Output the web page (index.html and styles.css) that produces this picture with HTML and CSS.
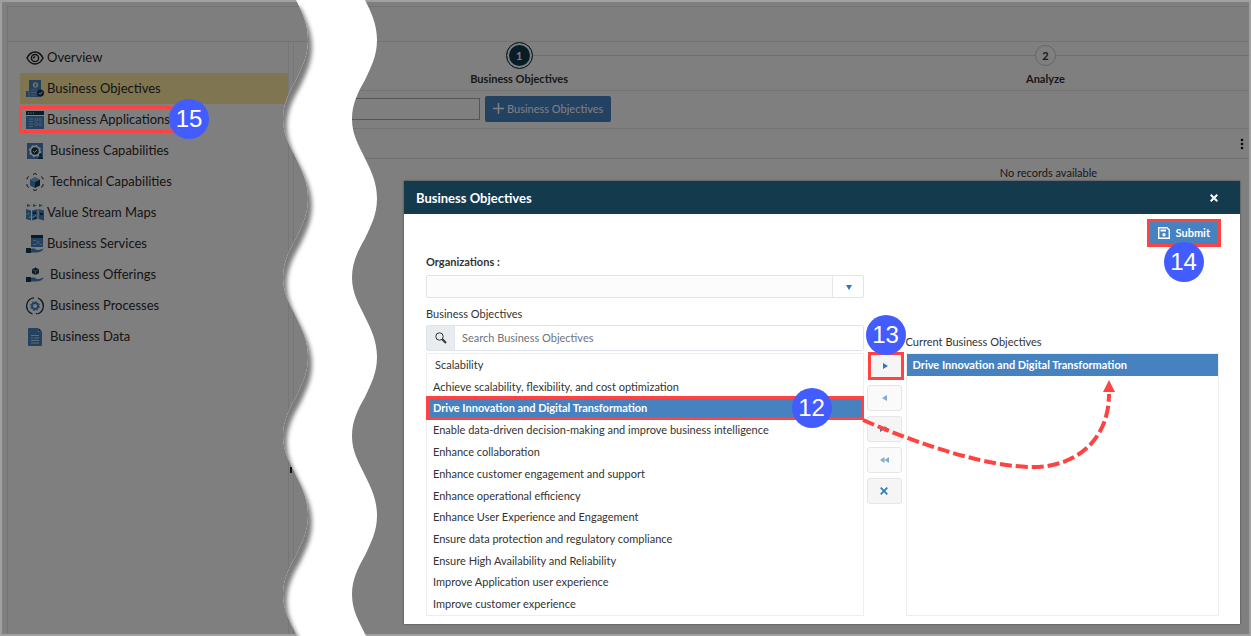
FILE: index.html
```
<!DOCTYPE html>
<html lang="en">
  <head>
    <meta charset="utf-8" />
    <meta name="viewport" content="width=device-width, initial-scale=1" />
    <title>Business Objectives</title>
    <link rel="stylesheet" href="styles.css">
  </head>
  <body>
    <div class="app">
      <header class="topbar"></header>

      <div class="content">
        <nav class="sidebar">
          <a href="#" class="nav-item">
            <svg class="icon" viewBox="0 0 18 18" fill="none" stroke="#222" stroke-width="1.5">
              <path d="M1 9c2-4 5-6 8-6s6 2 8 6c-2 4-5 6-8 6s-6-2-8-6z" />
              <circle cx="9" cy="9" r="3.6" />
              <path d="M7.5 9.5c0-1 .7-1.7 1.8-1.8" />
            </svg>
            Overview
          </a>
          <a href="#" class="nav-item active">
            <svg class="icon" viewBox="0 0 18 18">
              <path d="M3 0h12v17H0v-6h3z" fill="#4682c0" />
              <circle cx="9.500" cy="5" r="2.700" fill="#e8e2c0" />
              <path d="M9.500 3.500v3M8.300 5h2.400" stroke="#4682c0" />
              <path d="M5 10h6M5 12.500h6M5 15h5M3 11v6" stroke="#8fb3d8" />
              <circle cx="14.500" cy="13" r="3.500" fill="#133a4d" />
              <path d="M12.800 13l1.300 1.300 2.200-2.500" stroke="#eee" fill="none" />
            </svg>
            Business Objectives
          </a>
          <a href="#" class="nav-item">
            <svg class="icon" viewBox="0 0 18 18">
              <path d="M0 0h18v4H0z" fill="#133a4d" />
              <path d="M0 5h18v13H0z" fill="#4682c0" />
              <path d="M2 2h1M4.500 2h1M7 2h1" stroke="#fff" />
              <path d="M3 8h4M3 10.500h4M3 13h4M3 15.500h4" stroke="#9cbfe0" />
              <g fill="none" stroke="#9cbfe0">
                <rect x="9" y="7.500" width="2.600" height="2.600" rx="1" />
                <rect x="13" y="7.500" width="2.600" height="2.600" rx="1" />
                <rect x="9" y="12" width="2.600" height="2.600" rx="1" />
                <rect x="13" y="12" width="2.600" height="2.600" rx="1" />
              </g>
            </svg>
            Business Applications
          </a>
          <a href="#" class="nav-item wide">
            <svg class="icon" viewBox="0 0 18 18">
              <path d="M1 1h16v16H1z" fill="#4682c0" />
              <circle cx="9" cy="9" r="5.400" fill="#fff" />
              <circle cx="9" cy="9" r="5.400" fill="none" stroke="#fff" stroke-width="1.500" stroke-dasharray="2 2.240" />
              <circle cx="9" cy="9" r="3.700" fill="#133a4d" />
              <path d="M7 9l1.500 1.500L11 7.800" stroke="#fff" fill="none" />
              <circle cx="14.500" cy="13" r="1.500" fill="#133a4d" />
              <path d="M12 17c0-3 5-3 5 0z" fill="#133a4d" />
            </svg>
            Business Capabilities
          </a>
          <a href="#" class="nav-item wide">
            <svg class="icon" viewBox="0 0 18 18">
              <path d="M9 4l5 2.500L9 9 4 6.500z" fill="#78a8d8" />
              <path d="M4 6.500L9 9v6l-5-2.500z" fill="#4682c0" />
              <path d="M14 6.500L9 9v6l5-2.500z" fill="#133a4d" />
              <path d="M7 1.500l2-1 2 1M1 6.500V5l2-1.500M17 6.500V5l-2-1.500M1 11v2l2 1.500M17 11v2l-2 1.500M7 16.500l2 1 2-1" fill="none" stroke="#333" />
            </svg>
            Technical Capabilities
          </a>
          <a href="#" class="nav-item">
            <svg class="icon" viewBox="0 0 18 18">
              <path d="M0 5l5 1.500v10L0 15zM6 6.500L11.500 5v10L6 16.500zM12.500 5L18 6.500v10L12.500 15z" fill="#4682c0" />
              <path d="M1 0l4 1.500L1 3zM7 0l4 1.500L7 3zM13 0l4 1.500L13 3z" fill="#2e9a64" />
              <path d="M0 9h4v2H0z" fill="#63b98c" />
              <path d="M7 8h3v2H7zM14 9h3v2h-3zM8 13h2v2H8z" fill="#133a4d" />
              <path d="M3 14c3-4 4 2 7-3" stroke="#dce8f3" fill="none" />
            </svg>
            Value Stream Maps
          </a>
          <a href="#" class="nav-item">
            <svg class="icon" viewBox="0 0 18 18">
              <path d="M5 0h12v3H5z" fill="#133a4d" />
              <path d="M5 3h12v9H5z" fill="#4682c0" />
              <path d="M7 5.500h3l4 4h2M7 9.500h3l4-4" stroke="#9cbfe0" fill="none" />
              <path d="M0 13h5v5H0z" fill="#133a4d" />
              <path d="M5 14c3-1 4 0 6 1h2l5-1.500c-2 3-5 4-8 4H5z" fill="#4682c0" />
            </svg>
            Business Services
          </a>
          <a href="#" class="nav-item wide">
            <svg class="icon" viewBox="0 0 18 18">
              <path d="M9.500 1.500L13 3.200v4L9.500 9 6 7.200v-4z" fill="#133a4d" />
              <path d="M6.500 3.700l3 1.500 3-1.500M9.500 5.200V8.500" stroke="#bbb" stroke-width=".7" fill="none" />
              <path d="M0 11h5v5H0z" fill="#133a4d" />
              <path d="M5 12c3-1 4 0 6 1h2l5-1.500c-2 3-5 4-8 4H5z" fill="#4682c0" />
            </svg>
            Business Offerings
          </a>
          <a href="#" class="nav-item wide">
            <svg class="icon" viewBox="0 0 18 18" fill="none">
              <path d="M6.500 1A8.400 8.400 0 0 0 4 15.700M14 2.300A8.400 8.400 0 0 1 11.500 17M8 .8l-1.500.3M11 17l-1-.8M12 1l2 1.300M4 15.700L6.500 17" stroke="#133a4d" stroke-width="1.300" />
              <circle cx="9" cy="9" r="3" stroke="#4682c0" stroke-width="2" />
              <circle cx="9" cy="9" r="4.500" stroke="#4682c0" stroke-dasharray="1.800 1.730" />
            </svg>
            Business Processes
          </a>
          <a href="#" class="nav-item wide">
            <svg class="icon" viewBox="0 0 18 18">
              <path d="M3 0h9v4h4v13a1 1 0 0 1-1 1H3a1 1 0 0 1-1-1V1a1 1 0 0 1 1-1z" fill="#4682c0" />
              <path d="M12.500 0L16 3.500h-3.500z" fill="#133a4d" />
              <path d="M5 7.500h8M5 10h2M8 10h5M5 12.500h8M5 15h8" stroke="#c8dbed" />
            </svg>
            Business Data
          </a>
        </nav>

        <main class="main">
          <ol class="steps">
            <li class="step current">
              <span class="step-number">1</span>
              <span class="step-label">Business Objectives</span>
            </li>
            <li class="step">
              <span class="step-number">2</span>
              <span class="step-label">Analyze</span>
            </li>
          </ol>
          <div class="toolbar">
            <input type="text" class="filter" aria-label="Filter" />
            <button type="button" class="add-button">
              <svg width="11" height="11" viewBox="0 0 11 11" stroke="#fff" stroke-width="1.500"><path d="M5.500 0v11M0 5.500h11" /></svg>
              Business Objectives
            </button>
          </div>
          <div class="grid-header">
            <button type="button" class="more" aria-label="More">
              <svg width="4" height="12" viewBox="0 0 4 12" fill="#111"><circle cx="2" cy="2" r="1.300" /><circle cx="2" cy="6" r="1.300" /><circle cx="2" cy="10" r="1.300" /></svg>
            </button>
          </div>
          <p class="empty">No records available</p>
        </main>
      </div>

      <div class="backdrop"></div>

      <!-- torn strip between the menu and the rest of the page -->
      <svg class="tear" width="120" height="800" viewBox="0 0 120 800">
        <defs>
          <clipPath id="strip">
            <path d="M95 0 c6 12 12 24 12 40 c0 16 -6 27 -12 40 c-7 12 -13 24 -13 39 c0 16 7 27 13 39.500 c6 12 12 24 12 40 c0 16 -6 27 -12 40 c-7 12 -13 24 -13 39 c0 16 7 27 13 39.500 c6 12 12 24 12 40 c0 16 -6 27 -12 40 c-7 12 -13 24 -13 39 c0 16 7 27 13 39.500 c6 12 12 24 12 40 c0 16 -6 27 -12 40 c-7 12 -13 24 -13 39 c0 16 7 27 13 39.500 c6 12 12 24 12 40 c0 16 -6 27 -12 40 c-7 12 -13 24 -13 39 c0 16 7 27 13 39.500 h-69 c-6 -12.500 -13 -23.500 -13 -39.500 c0 -15 6 -27 13 -39 c6 -13 12 -24 12 -40 c0 -16 -6 -28 -12 -40 c-6 -12.500 -13 -23.500 -13 -39.500 c0 -15 6 -27 13 -39 c6 -13 12 -24 12 -40 c0 -16 -6 -28 -12 -40 c-6 -12.500 -13 -23.500 -13 -39.500 c0 -15 6 -27 13 -39 c6 -13 12 -24 12 -40 c0 -16 -6 -28 -12 -40 c-6 -12.500 -13 -23.500 -13 -39.500 c0 -15 6 -27 13 -39 c6 -13 12 -24 12 -40 c0 -16 -6 -28 -12 -40 c-6 -12.500 -13 -23.500 -13 -39.500 c0 -15 6 -27 13 -39 c6 -13 12 -24 12 -40 c0 -16 -6 -28 -12 -40 z" />
          </clipPath>
          <filter id="soft" x="-20%" width="140%"><feGaussianBlur stdDeviation="2" /></filter>
        </defs>
        <path d="M20 467h2v6h-2z" fill="#111" />
        <g clip-path="url(#strip)">
          <path d="M0 0h120v800H0z" fill="#fff" />
          <path transform="translate(4 7)" filter="url(#soft)" fill="#7c7c7c" d="M-20 0 H26 c6 12 12 24 12 40 c0 16 -6 27 -12 40 c-7 12 -13 24 -13 39 c0 16 7 27 13 39.500 c6 12 12 24 12 40 c0 16 -6 27 -12 40 c-7 12 -13 24 -13 39 c0 16 7 27 13 39.500 c6 12 12 24 12 40 c0 16 -6 27 -12 40 c-7 12 -13 24 -13 39 c0 16 7 27 13 39.500 c6 12 12 24 12 40 c0 16 -6 27 -12 40 c-7 12 -13 24 -13 39 c0 16 7 27 13 39.500 c6 12 12 24 12 40 c0 16 -6 27 -12 40 c-7 12 -13 24 -13 39 c0 16 7 27 13 39.500 H-20z" />
        </g>
      </svg>

      <div class="callout-box nav-callout"><span class="badge">15</span></div>

      <section class="modal" role="dialog" aria-labelledby="modal-title">
        <header class="modal-header">
          <h1 id="modal-title">Business Objectives</h1>
          <button type="button" class="close" aria-label="Close">
            <svg width="8" height="8" viewBox="0 0 8 8" stroke="#fff" stroke-width="2"><path d="M.7.7l6.600 6.600M7.300.7L.7 7.300" /></svg>
          </button>
        </header>

        <form class="modal-body">
          <div class="actions">
            <button type="button" class="submit">
              <svg width="12" height="12" viewBox="0 0 12 12" fill="none" stroke="#fff" stroke-width="1.400">
                <path d="M.7.7h8.300l2.300 2.300v8.300H.7z" />
                <path d="M2.500 3.500h5.500" stroke-width="2" />
                <circle cx="6" cy="7.800" r="1" />
              </svg>
              Submit
              <span class="badge">14</span>
            </button>
          </div>

          <div class="picker">
            <div class="available">
              <label class="label-strong" for="organizations">Organizations :</label>
              <div class="select-wrap">
                <select id="organizations"><option></option></select>
                <svg class="caret" width="6" height="5" viewBox="0 0 6 5" fill="#2f78bd"><path d="M0 0h6L3 5z" /></svg>
              </div>

              <label class="label" for="search">Business Objectives</label>
              <div class="search">
                <span class="search-icon">
                  <svg width="12" height="12" viewBox="0 0 12 12" fill="none" stroke="#333"><circle cx="4.500" cy="4.500" r="3.700" /><path d="M7.300 7.300L11 11" stroke-width="2" /></svg>
                </span>
                <input type="text" id="search" placeholder="Search Business Objectives" />
              </div>

              <ul class="list" role="listbox" aria-label="Business Objectives">
                <li class="indent" role="option">Scalability</li>
                <li role="option">Achieve scalability, flexibility, and cost optimization</li>
                <li class="selected marked" role="option" aria-selected="true">Drive Innovation and Digital Transformation<span class="badge">12</span></li>
                <li role="option">Enable data-driven decision-making and improve business intelligence</li>
                <li role="option">Enhance collaboration</li>
                <li role="option">Enhance customer engagement and support</li>
                <li role="option">Enhance operational efficiency</li>
                <li role="option">Enhance User Experience and Engagement</li>
                <li role="option">Ensure data protection and regulatory compliance</li>
                <li role="option">Ensure High Availability and Reliability</li>
                <li role="option">Improve Application user experience</li>
                <li role="option">Improve customer experience</li>
              </ul>
            </div>

            <div class="transfer">
              <button type="button" class="marked" aria-label="Add">
                <svg width="5" height="6" viewBox="0 0 5 6" fill="#2f78bd"><path d="M0 0l5 3-5 3z" /></svg>
                <span class="badge">13</span>
              </button>
              <button type="button" aria-label="Remove" disabled>
                <svg width="5" height="6" viewBox="0 0 5 6" fill="#2f78bd"><path d="M5 0L0 3l5 3z" /></svg>
              </button>
              <button type="button" aria-label="Add all">
                <svg width="9" height="6" viewBox="0 0 9 6" fill="#2f78bd"><path d="M0 0l4.500 3L0 6zM4.500 0L9 3 4.500 6z" /></svg>
              </button>
              <button type="button" aria-label="Remove all" disabled>
                <svg width="9" height="6" viewBox="0 0 9 6" fill="#2f78bd"><path d="M4.500 0L0 3l4.500 3zM9 0L4.500 3 9 6z" /></svg>
              </button>
              <button type="button" aria-label="Clear">
                <svg width="8" height="8" viewBox="0 0 8 8" stroke="#2f78bd" stroke-width="1.700"><path d="M.7.7l6.600 6.600M7.300.7L.7 7.300" /></svg>
              </button>
            </div>

            <div class="chosen">
              <h2 class="label">Current Business Objectives</h2>
              <ul class="list" role="listbox" aria-label="Current Business Objectives">
                <li class="selected" role="option" aria-selected="true">Drive Innovation and Digital Transformation</li>
              </ul>
            </div>
          </div>
        </form>

        <svg class="arrow" width="260" height="100" viewBox="0 0 260 100">
          <path d="M3 44 C65 71 130 91 173 91 S249 64 249 18" fill="none" stroke="#ff4343" stroke-width="4" stroke-dasharray="12 4" />
          <path d="M249 4l6 12h-12z" fill="#ff4343" />
        </svg>
      </section>
    </div>
  </body>
</html>
```
FILE: styles.css
```
* {
  box-sizing: border-box;
}
body {
  margin: 0;
  font-family: Lato, "Liberation Sans", sans-serif;
  font-size: 11px;
  color: #333;
}
button,
input,
select {
  font: inherit;
  color: inherit;
}
button {
  padding: 0;
  border: none;
  background: none;
  cursor: pointer;
}
ul,
ol {
  list-style: none;
  margin: 0;
  padding: 0;
}

/* page behind the dialog */
.app {
  position: relative;
  display: flex;
  flex-direction: column;
  height: 100vh;
  min-height: 600px;
  padding: 6px 2px 2px 7px;
  background: #fff;
  overflow: hidden;
}
.topbar {
  height: 36px;
  flex: none;
  border: 1px solid #e6e6e6;
  border-right: none;
  background: #fcfcfc;
}
.content {
  display: flex;
  flex: 1;
}
.sidebar {
  width: 282px;
  flex: none;
  padding-left: 12px;
  border-left: 1px solid #e6e6e6;
  border-right: 1px solid #ececec;
}
.nav-item {
  display: flex;
  align-items: center;
  gap: 3px;
  height: 31px;
  padding: 0 0 2px 6px;
  font-size: 13px;
  color: #2b2b2b;
  text-decoration: none;
}
.nav-item.wide {
  gap: 6px;
}
.nav-item.active {
  background: #ffeaa0;
  border-radius: 2px;
}
.icon {
  width: 18px;
  height: 18px;
  flex: none;
  margin-top: 2px;
}
.main {
  flex: 1;
  min-width: 0;
  margin-left: 4px;
  border-left: 1px solid #ececec;
  overflow: hidden;
}
.steps {
  display: flex;
  height: 49px;
  margin-left: -38px;
  border-bottom: 1px solid #e6e6e6;
}
.step {
  position: relative;
  display: flex;
  flex-direction: column;
  align-items: center;
  width: 53%;
  flex: none;
}
.step::before {
  content: "";
  position: absolute;
  top: 13px;
  left: 0;
  right: -100%;
  border-top: 1px solid #dcdcdc;
}
.step.current::before {
  left: 50%;
  right: 0;
}
.step-number {
  position: relative;
  display: flex;
  align-items: center;
  justify-content: center;
  width: 21px;
  height: 21px;
  margin: 3px 0;
  border: 1px solid #ccc;
  border-radius: 50%;
  background: #fff;
  font-weight: bold;
}
.current .step-number {
  width: 27px;
  height: 27px;
  margin: 0;
  border: 1px solid #133a4d;
  background: #133a4d;
  box-shadow: inset 0 0 0 2px #fff;
  color: #fff;
}
.step-label {
  margin-top: 2px;
  line-height: 16px;
  font-weight: bold;
}
.toolbar {
  display: flex;
  align-items: center;
  gap: 5px;
  height: 38px;
  padding-bottom: 2px;
  border-bottom: 1px solid #e6e6e6;
}
.filter {
  width: 186px;
  height: 22px;
  border: 1px solid #aaa;
}
.add-button {
  display: flex;
  align-items: center;
  gap: 3px;
  height: 26px;
  padding: 0 8px;
  border-radius: 2px;
  background: #4682c0;
  color: #fff;
}
.grid-header {
  display: flex;
  align-items: center;
  justify-content: flex-end;
  height: 30px;
  padding-right: 5px;
  border-bottom: 1px solid #dfdfea;
}
.more {
  display: flex;
}
.empty {
  margin: 6px 0 0 58%;
  line-height: 16px;
  text-align: center;
}
.backdrop {
  position: absolute;
  inset: 0;
  border: 2px solid #a0a0a0;
  background: rgba(0, 0, 0, 0.5);
  background-clip: padding-box;
}
.tear {
  position: absolute;
  top: 0;
  left: 270px;
}

/* numbered callouts */
.badge {
  position: absolute;
  display: flex;
  align-items: center;
  justify-content: center;
  width: 40px;
  height: 40px;
  border-radius: 50%;
  background: #425cff;
  color: #fff;
  font-family: "Liberation Sans", Arial, sans-serif;
  font-size: 24px;
  font-weight: normal;
}
.callout-box {
  position: absolute;
  border: 3px solid #ff4343;
}
.nav-callout {
  top: 106px;
  left: 19px;
  width: 170px;
  height: 27px;
}
.nav-callout .badge {
  top: -10px;
  right: -23px;
}

/* dialog */
.modal {
  position: absolute;
  top: 181px;
  left: 404px;
  right: 11px;
  bottom: 12px;
  display: flex;
  flex-direction: column;
  background: #fff;
  box-shadow: 0 0 2px rgba(0, 0, 0, 0.5);
}
.modal-header {
  display: flex;
  align-items: center;
  justify-content: space-between;
  height: 33px;
  flex: none;
  padding: 0 22px 0 12px;
  background: #133a4d;
  color: #fff;
}
.modal-header h1 {
  margin: 0;
  font-size: 13px;
}
.close {
  display: flex;
}
.modal-body {
  display: flex;
  flex-direction: column;
  flex: 1;
  min-height: 0;
  padding: 5px 21px 8px 22px;
}
.actions {
  display: flex;
  justify-content: flex-end;
  margin-right: -2px;
}
.submit {
  position: relative;
  display: flex;
  align-items: center;
  gap: 6px;
  height: 28px;
  padding: 0 8px 2px;
  border: 3px solid #ff4343;
  background: #4682c0;
  color: #fff;
  font-weight: bold;
}
.submit svg {
  margin-top: 2px;
}
.submit .badge {
  top: 20px;
  left: 14px;
}
.picker {
  display: flex;
  flex: 1;
  min-height: 0;
}
.available {
  display: flex;
  flex-direction: column;
  flex: 437;
  min-width: 0;
}
.label,
.label-strong {
  margin: 0;
  font-size: 11px;
  font-weight: normal;
  line-height: 16px;
}
.label-strong {
  margin: 7px 0 5px;
  font-weight: bold;
}
.select-wrap {
  position: relative;
  height: 23px;
  flex: none;
  margin-bottom: 8px;
}
.select-wrap select {
  appearance: none;
  width: 100%;
  height: 100%;
  border: 1px solid #dfe3ea;
  border-radius: 2px;
  background: linear-gradient(to left, #fff 30px, #e4e7ec 30px, #e4e7ec 31px, #fcfcfc 31px);
}
.caret {
  position: absolute;
  top: 10px;
  right: 12px;
}
.search {
  display: flex;
  height: 26px;
  flex: none;
  margin: 3px 0 2px;
  border: 1px solid #dfe3ea;
  border-radius: 2px;
}
.search-icon {
  display: flex;
  align-items: center;
  justify-content: center;
  width: 28px;
  border-right: 1px solid #dfe3ea;
  background: #e9ecef;
}
.search input {
  flex: 1;
  min-width: 0;
  padding: 0 7px 2px;
  border: none;
}
.search input::placeholder {
  color: #6c757d;
}
.list {
  display: flex;
  flex-direction: column;
  flex: 1;
  min-height: 0;
  border: 1px solid #eee;
}
.list li {
  display: flex;
  align-items: center;
  flex: 1;
  padding: 0 0 1px 6px;
  white-space: nowrap;
}
.list li.indent {
  padding-left: 8px;
}
.list li.selected {
  background: #4682c0;
  color: #fff;
  font-weight: bold;
}
.list li.marked {
  position: relative;
  flex: none;
  height: 24px;
  margin: -1px;
  padding: 0 0 2px 4px;
  border: 3px solid #ff4343;
}
.list .badge {
  top: -11px;
  right: 29px;
}
.transfer {
  display: flex;
  flex-direction: column;
  align-items: flex-start;
  gap: 5px;
  flex: none;
  width: 42px;
  padding: 105px 2px 0 3px;
}
.transfer button {
  display: flex;
  align-items: center;
  justify-content: center;
  width: 35px;
  height: 26px;
  flex: none;
  border: 1px solid #e6e6e6;
  border-radius: 3px;
  background: #f5f5f5;
}
.transfer button:disabled {
  background: #fafafa;
}
.transfer button:disabled svg {
  opacity: 0.6;
}
.transfer .marked {
  position: relative;
  align-self: flex-end;
  width: 36px;
  height: 28px;
  border: 3px solid #ff4343;
  border-radius: 0;
}
.transfer .badge {
  top: -40px;
  left: -5px;
}
.chosen {
  display: flex;
  flex-direction: column;
  flex: 313;
  min-width: 0;
  padding-top: 87px;
}
.chosen .label {
  margin-bottom: 3px;
}
.chosen .list li {
  flex: none;
  height: 22px;
}
.arrow {
  position: absolute;
  top: 195px;
  left: 456px;
  pointer-events: none;
}
```
